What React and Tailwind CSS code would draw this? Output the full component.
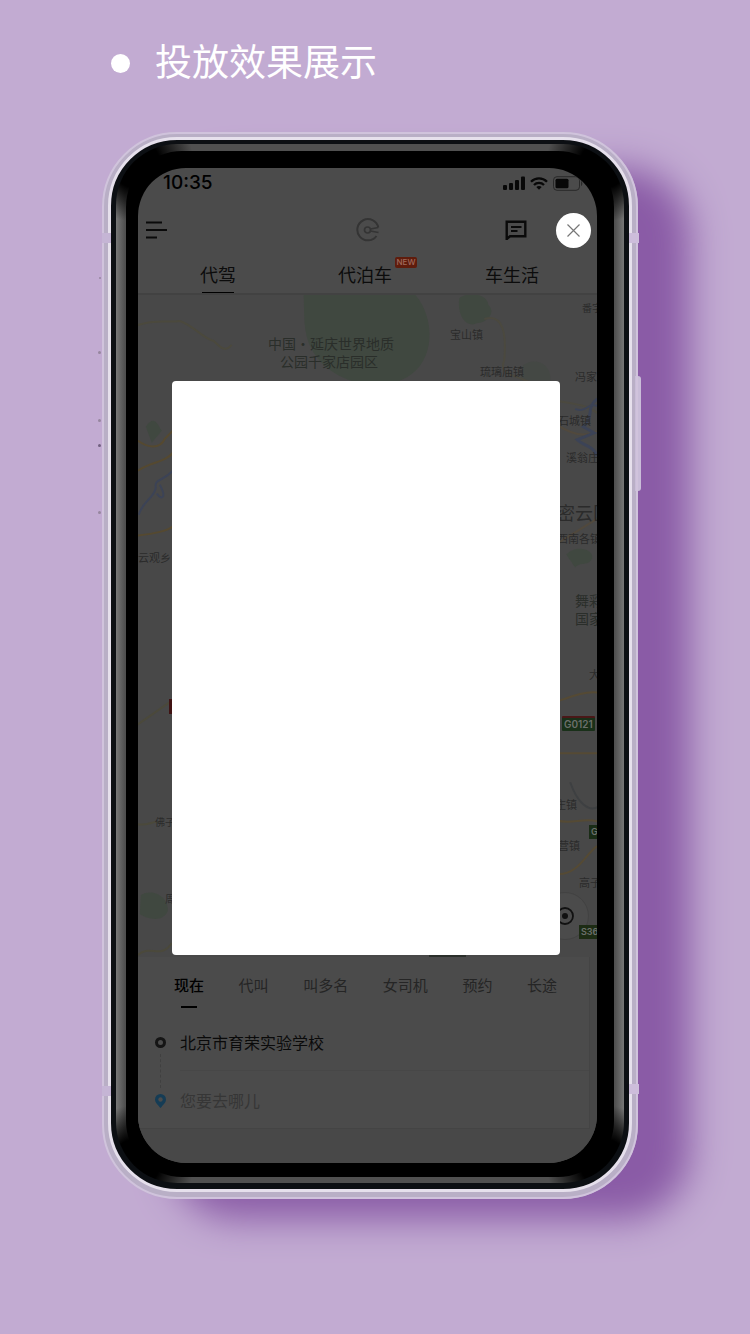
import React from "react";

const mapLabels = [
  { text: "中国·延庆世界地质", place: "left-[130px] top-[40px] text-[14px] text-[#2a2e2a]" },
  { text: "公园千家店园区", place: "left-[142px] top-[58px] text-[14px] text-[#2a2e2a]" },
  { text: "宝山镇", place: "left-[312px] top-[31px] text-[11px] text-[#2b2b2b]" },
  { text: "琉璃庙镇", place: "left-[342px] top-[68px] text-[11px] text-[#2b2b2b]" },
  { text: "番字", place: "left-[444px] top-[5px] text-[10px] text-[#2b2b2b]" },
  { text: "冯家", place: "left-[437px] top-[73px] text-[11px] text-[#2b2b2b]" },
  { text: "石城镇", place: "left-[420px] top-[117px] text-[11px] text-[#2b2b2b]" },
  { text: "溪翁庄", place: "left-[428px] top-[154px] text-[11px] text-[#2b2b2b]" },
  { text: "密云区", place: "left-[419px] top-[209px] text-[18px] text-[#2b2b2b]" },
  { text: "西南各镇", place: "left-[419px] top-[235px] text-[11px] text-[#2b2b2b]" },
  { text: "舞彩", place: "left-[437px] top-[297px] text-[14px] text-[#2a2e2a]" },
  { text: "国家", place: "left-[437px] top-[315px] text-[14px] text-[#2a2e2a]" },
  { text: "大", place: "left-[451px] top-[371px] text-[11px] text-[#2b2b2b]" },
  { text: "云观乡", place: "left-[0px] top-[254px] text-[11px] text-[#2b2b2b]" },
  { text: "佛子", place: "left-[17px] top-[519px] text-[10px] text-[#2b2b2b]" },
  { text: "周", place: "left-[27px] top-[596px] text-[10px] text-[#2b2b2b]" },
  { text: "庄镇", place: "left-[417px] top-[501px] text-[11px] text-[#2b2b2b]" },
  { text: "营镇", place: "left-[420px] top-[542px] text-[11px] text-[#2b2b2b]" },
  { text: "高子", place: "left-[441px] top-[579px] text-[11px] text-[#2b2b2b]" },
];

const rideTabs = ["现在", "代叫", "叫多名", "女司机", "预约", "长途"];

function StatusBar() {
  return (
    <div className="flex h-[30px] items-center justify-between pl-[25px] pr-[14px]">
      <span className="font-['Inter',sans-serif] text-[19px] leading-[30px] font-medium text-black">10:35</span>
      <div className="flex items-center gap-[5px]">
        <svg width="22" height="14" viewBox="0 0 22 14" fill="#080808">
          <rect x="0" y="9" width="4" height="5" rx="1" />
          <rect x="6" y="7" width="4" height="7" rx="1" />
          <rect x="12" y="4" width="4" height="10" rx="1" />
          <rect x="18" y="0.5" width="4" height="13.5" rx="1" />
        </svg>
        <svg width="18" height="13" viewBox="0 0 18 13" fill="none" stroke="#080808" strokeWidth="2.3">
          <path d="M1 4.8C5.5.3 12.500.3 17 4.800" />
          <path d="M4 8C6.800 5.200 11.200 5.200 14 8" />
          <path d="M9 12.800L6.300 10C7.800 8.700 10.200 8.700 11.700 10Z" fill="#080808" stroke="none" />
        </svg>
        <svg width="30" height="15" viewBox="0 0 30 15">
          <rect x="0.500" y="0.700" width="26" height="13.600" rx="3.500" fill="none" stroke="#292929" />
          <rect x="2.500" y="2.700" width="13" height="9.600" rx="1.500" fill="#080808" />
          <path d="M28 5c1.800.6 1.800 4.400 0 5z" fill="#292929" />
        </svg>
      </div>
    </div>
  );
}

function AppHeader() {
  return (
    <header>
      <div className="flex h-[64px] items-center justify-between pl-[8px] pr-[6px]">
        <button type="button" aria-label="菜单" className="w-[84px]">
          <svg width="21" height="18" viewBox="0 0 21 18" fill="none" stroke="#0a0a0a" strokeWidth="2">
            <path d="M0 1.500H16M0 9H21M0 16.500H11" />
          </svg>
        </button>
        <svg width="24" height="24" viewBox="0 0 24 24" fill="none" stroke="#343434" strokeWidth="2">
          <path d="M22.300 9.500A10.600 10.600 0 1 0 20.500 18" />
          <circle cx="11.500" cy="12" r="3" strokeWidth="1.700" />
          <path d="M14.500 11L22.300 9.500M14.500 13L22.500 14.500" strokeWidth="1.500" />
        </svg>
        <div className="flex items-center gap-[29px]">
          <button type="button" aria-label="消息">
            <svg width="22" height="21" viewBox="0 0 22 21" fill="none" stroke="#0a0a0a" strokeWidth="2.400">
              <path d="M1.700 20V1.800H20.300V16.300H5L1.700 19" />
              <path d="M6 7H16.500M6 11H12.500" strokeWidth="2" />
            </svg>
          </button>
          <button
            type="button"
            aria-label="关闭"
            className="flex h-[35px] w-[35px] items-center justify-center rounded-full bg-white"
          >
            <svg width="13" height="13" viewBox="0 0 13 13" fill="none" stroke="#777" strokeWidth="1.200">
              <path d="M.5.5l12 12M12.500.5l-12 12" />
            </svg>
          </button>
        </div>
      </div>
      <nav className="flex h-[31px] items-start justify-between pl-[62px] pr-[58px] text-[18px] leading-[24px] text-[#0c0c0c]">
        <button type="button" className="flex flex-col items-center">
          代驾
          <span className="mt-[6px] h-[2px] w-[32px] bg-black" />
        </button>
        <button type="button" className="relative ml-[9px]">
          代泊车
          <span className="absolute -top-[5px] left-[57px] flex h-[11px] w-[22px] items-center justify-center rounded-[2px] bg-[#5f1c0c] font-['Inter',sans-serif] text-[8px] leading-[11px] font-medium text-[#a06a5c]">
            NEW
          </span>
        </button>
        <button type="button">车生活</button>
      </nav>
    </header>
  );
}

function MapView() {
  return (
    <div className="relative h-[664px] overflow-hidden border-t-2 border-[#424242] bg-[#484848]">
      <svg
        className="absolute inset-0 h-full w-full"
        viewBox="0 0 460 663"
        preserveAspectRatio="xMidYMid slice"
        fill="none"
      >
        <g fill="#404840">
          <path d="M166 0H278C299 25 297 67 270 82C240 99 191 87 174 54C165 38 167 18 166 0Z" />
          <path d="M322 3C330-3 350-2 351 10C359 17 350 28 340 28C330 34 319 21 322 3Z" />
          <path d="M429 260C438 250 457 254 455 264C451 272 443 267 438 273Z" />
          <path d="M3 601C14 594 31 602 30 617C25 629 9 625 2 620Z" />
          <path d="M8 132C16 120 19 128 24 136L14 148Z" />
          <path d="M386 70C400 61 415 71 413 86H383Z" opacity=".5" />
        </g>
        <g stroke="#504a3c" strokeWidth="2">
          <path d="M0 30C19 24 31 28 42 26C55 30 66 44 76 46C84 54 88 57 94 50" stroke="#4b493d" />
          <path d="M0 146C10 153 22 155 27 144L36 135M0 176C15 166 26 169 36 157M0 241C15 239 29 237 36 231" stroke="#554930" />
          <path d="M347 24C367 18 369 41 367 65C359 86 389 76 402 98C419 111 440 104 460 118" stroke="#4b493f" />
          <path d="M420 407C437 401 447 397 460 398M420 459H460M420 526C433 531 446 523 460 527M422 580C441 580 449 559 460 552" stroke="#554a34" />
          <path d="M0 661C12 650 23 666 34 649M0 530C10 532 16 526 21 528M0 430L36 405" stroke="#4b493b" />
          <path d="M420 249L460 224M420 130C435 140 448 143 460 136" stroke="#51493d" />
        </g>
        <g stroke="#3c4356" strokeWidth="3">
          <path d="M1 220C5 206 16 204 18 193C16 184 25 187 35 176M22 190C29 203 24 206 19 199" strokeWidth="2" />
          <path d="M460 104C448 113 458 121 446 132L457 138L440 145C446 151 455 150 460 161" />
          <path d="M438 114C448 119 451 107 460 111" strokeWidth="2" />
        </g>
        <path d="M433 488C440 508 451 518 460 513" stroke="#3e4042" strokeWidth="2" />
      </svg>
      {mapLabels.map((label) => (
        <span key={label.text} className={"absolute leading-[16px] whitespace-nowrap " + label.place}>
          {label.text}
        </span>
      ))}
      <span className="absolute top-[421px] left-[424px] rounded-[1px] border-t-2 border-[#4a1717] bg-[#193019] px-[2px] font-['Inter',sans-serif] text-[10px] leading-[13px] font-semibold text-[#6b6f6b]">
        G0121
      </span>
      <span className="absolute top-[530px] left-[451px] bg-[#1a2c16] px-[2px] font-['Inter',sans-serif] text-[9px] leading-[14px] font-semibold text-[#6b6f6b]">
        G
      </span>
      <span className="absolute top-[404px] left-[31px] h-[15px] w-[6px] bg-[#401313]" />
      <button
        type="button"
        aria-label="定位"
        className="absolute top-[597px] left-[403px] flex h-[48px] w-[48px] items-center justify-center rounded-full border border-[#424242] bg-[#4b4b4b]"
      >
        <svg width="20" height="20" viewBox="0 0 20 20">
          <circle cx="10" cy="10" r="8" fill="none" stroke="#111" strokeWidth="1.800" />
          <circle cx="10" cy="10" r="3" fill="#111" />
        </svg>
      </button>
      <span className="absolute top-[630px] left-[441px] bg-[#1d2c14] px-[2px] font-['Inter',sans-serif] text-[9px] leading-[14px] font-semibold text-[#6b6f6b]">
        S36
      </span>
      <span className="absolute top-[658px] left-[291px] h-[4px] w-[37px] bg-[#2b2f2b]" />
    </div>
  );
}

function RidePanel() {
  return (
    <section className="bg-[#484848] pb-[34px]">
      <div className="mr-[7px] border-r border-b border-[#444] bg-[#4b4b4b]">
        <div className="flex h-[56px] items-start justify-between pt-[16px] pr-[32px] pl-[36px] text-[15px] leading-[24px] text-[#252525]">
          {rideTabs.map((tab, i) =>
            i === 0 ? (
              <button key={tab} type="button" className="flex flex-col items-center font-medium text-black">
                {tab}
                <span className="mt-[9px] h-[2px] w-[16px] bg-black" />
              </button>
            ) : (
              <button key={tab} type="button">
                {tab}
              </button>
            )
          )}
        </div>
        <div className="flex items-stretch pl-[16px]">
          <div className="flex w-[26px] flex-col items-start pt-[24px] pb-[20px]">
            <span className="ml-[1px] h-[11px] w-[11px] rounded-full border-[3px] border-[#151515]" />
            <span className="my-[6px] ml-[6px] flex-1 border-l border-dashed border-[#404040]" />
            <svg width="13" height="14" viewBox="0 0 13 14">
              <path d="M6.500 14C4 11 1 8.500 1 5.500a5.500 5.500 0 0 1 11 0C12 8.500 9 11 6.500 14Z" fill="#153c55" />
              <circle cx="6.500" cy="5.500" r="2.200" fill="#4b4b4b" />
            </svg>
          </div>
          <div className="min-w-0 flex-1">
            <div className="flex h-[58px] items-center border-b border-[#474747]">
              <input
                aria-label="出发地"
                defaultValue="北京市育荣实验学校"
                className="w-full bg-transparent text-[16px] leading-[24px] text-[#0a0a0a] outline-none"
              />
            </div>
            <div className="flex h-[57px] items-center">
              <input
                aria-label="目的地"
                placeholder="您要去哪儿"
                className="w-full bg-transparent text-[16px] leading-[24px] outline-none placeholder:text-[#363636]"
              />
            </div>
          </div>
        </div>
      </div>
    </section>
  );
}

function Phone() {
  return (
    <div className="relative rounded-[75px] bg-[#b9afc6] shadow-[60px_28px_36px_-8px_#8a5ba6]">
      <span className="absolute top-[244px] -right-[3px] h-[115px] w-[6px] rounded-r-[3px] bg-[#c9bdd8]" />
      <span className="absolute top-[145px] left-[-3px] h-[2px] w-[2px] rounded-full bg-[#96869f]" />
      <span className="absolute top-[219px] left-[-4px] h-[3px] w-[3px] rounded-full bg-[#96869f]" />
      <span className="absolute top-[287px] left-[-4px] h-[3px] w-[3px] rounded-full bg-[#96869f]" />
      <span className="absolute top-[312px] left-[-4px] h-[3px] w-[3px] rounded-full bg-[#716080]" />
      <span className="absolute top-[379px] left-[-4px] h-[3px] w-[3px] rounded-full bg-[#96869f]" />
      <div className="relative rounded-[75px] border-2 border-[#d0c3dc] px-[4px] pt-[3px] pb-[5px]">
        <div className="rounded-[69px] border-[3px] border-[#e6e0ec] bg-[#0c0f13] px-[5px] pt-[4px] pb-[6px]">
          <div className="rounded-[61px] bg-[radial-gradient(circle_at_20px_20px,#000_24px,transparent_58px),radial-gradient(circle_at_calc(100%-20px)_20px,#000_24px,transparent_58px),radial-gradient(circle_at_20px_calc(100%-20px),#000_24px,transparent_58px),radial-gradient(circle_at_calc(100%-20px)_calc(100%-20px),#000_24px,transparent_58px),linear-gradient(90deg,#777,#505050_9px,#505050_calc(100%-9px),#777)] px-[10px] pt-[7px] pb-[6px]">
            <div className="rounded-[56px] bg-black pt-[17px] pr-[17px] pb-[14px] pl-[12px]">
              <div className="relative overflow-hidden rounded-[48px] bg-[#4b4b4b]">
                <StatusBar />
                <AppHeader />
                <MapView />
                <RidePanel />
                <div
                  role="dialog"
                  aria-label="广告"
                  className="absolute top-[213px] right-[37px] left-[34px] h-[574px] rounded-[4px] bg-white"
                />
              </div>
            </div>
          </div>
        </div>
      </div>
      <span className="absolute top-[101px] left-0 h-[10px] w-[9px] bg-[#c5b5d5]" />
      <span className="absolute top-[101px] -right-[1px] h-[10px] w-[10px] bg-[#cdbddb]" />
      <span className="absolute bottom-[103px] left-0 h-[10px] w-[9px] bg-[#c5b5d5]" />
      <span className="absolute -right-[1px] bottom-[105px] h-[10px] w-[10px] bg-[#cdbddb]" />
    </div>
  );
}

export default function App() {
  return (
    <main className="min-h-screen overflow-hidden bg-[#c2abd2] pr-[112px] pb-[136px] pl-[102px] font-['Noto_Sans_CJK_SC',sans-serif]">
      <div className="flex h-[132px] items-start gap-[25px] pt-[35px] pl-[9px]">
        <span className="mt-[19px] h-[19px] w-[19px] rounded-full bg-white" />
        <h1 className="text-[37px] leading-[50px] font-normal text-white">投放效果展示</h1>
      </div>
      <Phone />
    </main>
  );
}
